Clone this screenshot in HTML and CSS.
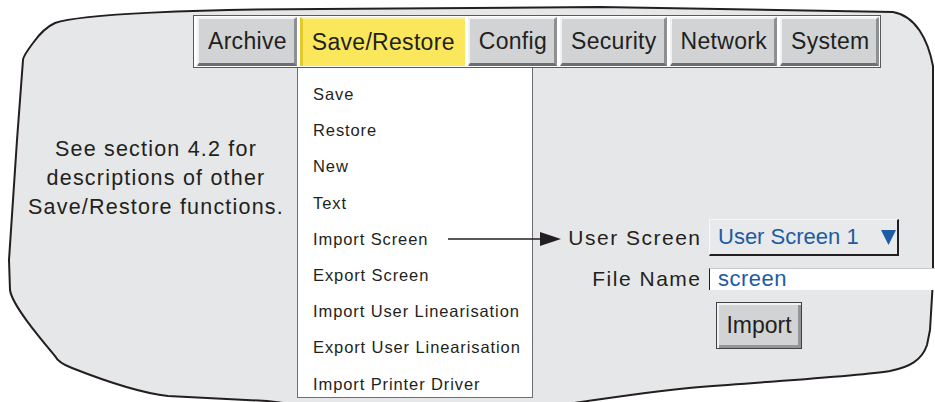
FILE: index.html
```html
<!DOCTYPE html>
<html lang="en">
<head>
    <meta charset="UTF-8">
    <title>Save/Restore - Import Screen</title>
    <link rel="stylesheet" href="styles.css">
</head>
<body>
    <div class="screen">
        <svg class="outline" width="935" height="402" viewBox="0 0 935 402">
            <path d="M23,60 L17,140 L9,260 L10,290 C12,305 40,338 55,356 C58,362 64,365 72,368 C105,381 140,393 168,396 L267,401 L300,405 L560,405 C610,398 660,390 700,387 C790,380 860,376 890,371 C910,367 922,360 927,345 L930,330 L933,280 L933,66 C928,40 916,16 893,12 L600,7 L320,9 C200,9 80,14 55,23 C46,27 38,36 33,43 C27,51 23,57 23,60 Z"/>
        </svg>

        <div class="tabbar">
            <div class="tab">Archive</div>
            <div class="tab active">Save/Restore</div>
            <div class="tab">Config</div>
            <div class="tab">Security</div>
            <div class="tab">Network</div>
            <div class="tab">System</div>
        </div>

        <div class="content">
            <p class="note">See section 4.2 for<br>descriptions of other<br>Save/Restore functions.</p>

            <ul class="menu">
                <li>Save</li>
                <li>Restore</li>
                <li>New</li>
                <li>Text</li>
                <li class="linked">Import Screen
                    <svg class="arrow" width="114" height="14" viewBox="0 0 114 14">
                        <line x1="0" y1="7" x2="94" y2="7"/>
                        <polygon points="92,0 113,7 92,14"/>
                    </svg>
                </li>
                <li>Export Screen</li>
                <li>Import User Linearisation</li>
                <li>Export User Linearisation</li>
                <li>Import Printer Driver</li>
            </ul>

            <div class="form">
                <label class="label">User Screen</label>
                <div class="select">
                    <span>User Screen 1</span>
                    <svg class="caret" width="15" height="15" viewBox="0 0 15 15"><polygon points="0,0 15,0 7.5,15"/></svg>
                </div>
                <label class="label">File Name</label>
                <div class="field">screen</div>
                <span></span>
                <button class="import">Import</button>
            </div>
        </div>
    </div>
</body>
</html>
```

FILE: styles.css
```css
body {
    margin: 0;
    background: #fff;
    font-family: "Liberation Sans", Arial, sans-serif;
    color: #231f20;
}
.screen {
    position: relative;
    width: 935px;
    height: 402px;
    overflow: hidden;
}
.outline {
    position: absolute;
    left: 0;
    top: 0;
    z-index: 0;
}
.outline path {
    fill: #e6e7e8;
    stroke: #231f20;
    stroke-width: 2;
}

/* tab bar */
.tabbar {
    position: relative;
    display: flex;
    gap: 3px;
    width: fit-content;
    margin: 15px 0 0 193px;
    padding: 1px 1px 1px 3px;
    background: #fff;
    border: 1px solid #58595b;
}
.tab {
    height: 49px;
    box-sizing: border-box;
    padding: 0 7px 0 9px;
    display: flex;
    align-items: center;
    font-size: 23px;
    letter-spacing: 0.3px;
    background: #d1d3d4;
    border-style: solid;
    border-width: 2px 3px 3px 2px;
    border-color: #f1f2f2 #8d8f92 #6d6e71 #f1f2f2;
}
.tab.active {
    background: #fae75c;
    border-width: 2px 0 0 3px;
    border-color: #fdf09a #fae75c #fae75c #e5c92b;
    padding-right: 10px;
}

/* body */
.content {
    position: relative;
    display: flex;
}
.note {
    width: 297px;
    box-sizing: border-box;
    margin: 0;
    padding: 67px 0 0 15px;
    text-align: center;
    font-size: 21.5px;
    letter-spacing: 1.2px;
    line-height: 29px;
}
.menu {
    width: 236px;
    height: 330px;
    box-sizing: border-box;
    margin: 0;
    padding: 8px 0 0 15px;
    list-style: none;
    background: #fff;
    border: 1px solid #6d6e71;
    border-top: none;
    font-size: 16.5px;
    letter-spacing: 0.9px;
    line-height: 36.2px;
}
.menu li {
    position: relative;
    white-space: nowrap;
}
.arrow {
    position: absolute;
    left: 135px;
    top: 11px;
    z-index: 2;
}
.arrow line {
    stroke: #231f20;
    stroke-width: 1.5;
}
.arrow polygon {
    fill: #231f20;
}

/* import form */
.form {
    flex: 1;
    display: grid;
    grid-template-columns: 167px 1fr;
    grid-template-rows: 37px 22px 47px;
    column-gap: 9px;
    row-gap: 12px;
    align-content: start;
    align-items: center;
    padding-top: 151px;
}
.label {
    text-align: right;
    font-size: 21px;
    letter-spacing: 1.5px;
    margin-right: -1.5px;
}
.select {
    width: 190px;
    height: 37px;
    box-sizing: border-box;
    display: flex;
    align-items: center;
    justify-content: space-between;
    padding: 0 1px 0 8px;
    background: #e8e9ea;
    border-style: solid;
    border-width: 1px 2px 2px 1px;
    border-color: #f7f7f7 #231f20 #231f20 #f7f7f7;
    font-size: 22px;
    color: #1d5ba4;
}
.caret {
    margin-top: 1px;
}
.caret polygon {
    fill: #1d5ba4;
}
.field {
    height: 22px;
    box-sizing: border-box;
    padding-left: 8px;
    background: #fff;
    border-left: 1px solid #231f20;
    border-top: 1px solid #c7c8ca;
    font-size: 22px;
    letter-spacing: 0.5px;
    line-height: 20px;
    color: #1d5ba4;
}
.import {
    justify-self: start;
    width: 86px;
    height: 47px;
    margin: -1px 0 0 7px;
    padding: 0;
    font-family: inherit;
    font-size: 23px;
    color: #231f20;
    background: #d1d3d4;
    border: 1px solid #414042;
    box-shadow: inset 2px 2px 0 #f1f2f2, inset -3px -3px 0 #939598;
}
```
